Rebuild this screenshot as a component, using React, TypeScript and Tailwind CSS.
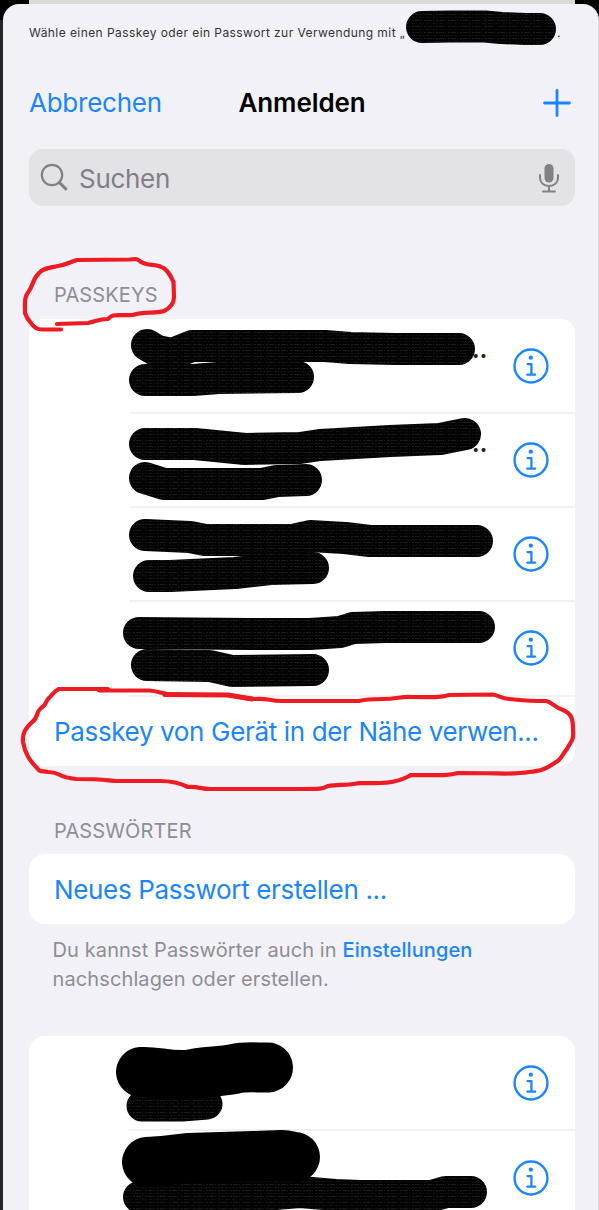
import { ReactNode } from 'react';

const InfoIcon = () => (
  <svg className="block size-[36px]" viewBox="0 0 35 35" fill="none" stroke="#1a85ff" strokeLinecap="round" strokeLinejoin="round">
    <circle cx="17.5" cy="17.5" r="16" strokeWidth="2.3" />
    <circle cx="17.3" cy="9.4" r="2.1" fill="#1a85ff" stroke="none" />
    <path d="M14.100 15.600h3.800v10.200M13.900 26h7.600" strokeWidth="2.200" />
  </svg>
);

function AccountRow({ more, last }: { more?: boolean; last?: boolean }) {
  return (
    <div className="flex h-[94.2px] shrink-0 pl-[100px]">
      <div className={`flex grow items-center justify-end pr-[26px] ${last ? '' : 'border-b-2 border-[#f1f1f2]'}`}>
        {more && <span className="mr-[26px] pb-[33px] text-[25px] leading-none font-semibold tracking-[-0.4px] text-[#222]">..</span>}
        <InfoIcon />
      </div>
    </div>
  );
}

function SectionTitle({ children }: { children: ReactNode }) {
  return <h2 className="pl-[25px] text-[20px] leading-[24px] tracking-[0.12px] text-[#8e8e93]">{children}</h2>;
}

const roughMarks: { d: string; w: number }[] = [
  { d: 'M422 27 L450 26.5 L485 26.5 L501 28 L525 29 L540 29', w: 32 },
  { d: 'M147 345 L157 351 L172 354 L192 346 L325 346 L350 348 L395 349 L459 349', w: 32 },
  { d: 'M145 380 L193 380 L218 378 L298 377', w: 32 },
  { d: 'M145 444 L195 444 L245 449 L300 448 L320 445 L390 441 L440 439 L465 434', w: 32 },
  { d: 'M145 478 L164 484 L262 484 L277 481 L306 480', w: 32 },
  { d: 'M145 535 L190 537 L205 540 L292 540 L310 536 L345 538 L370 541 L477 541', w: 32 },
  { d: 'M149 576 L170 576 L235 573 L270 569 L313 568', w: 32 },
  { d: 'M139 633 L250 634 L310 634 L340 632 L353 628 L385 627 L479 627', w: 32 },
  { d: 'M147 665 L210 666 L232 671 L313 670', w: 32 },
  { d: 'M142 1106 L182 1106 L207 1104', w: 31 },
  { d: 'M139 1197 L240 1197 L300 1192 L335 1195 L360 1196 L432 1196 L446 1192 L471 1192', w: 32 },
];

const smoothMarks = [
  'M141 1072 C157 1071 164 1076 188 1075 C204 1071 220 1072 234 1069 C247 1066 258 1068 268 1067.500',
  'M147 1162 C163 1161 173 1160 188 1158 L253 1156 L282 1155 C288 1155 292 1157 295 1157',
];

const circles = [
  'M57 324 L88 323 C97 321 99 319 108 319 C113 313 117 316 133 315 C144 311 154 314 164 311 C170 308 174 304 174 297 L173.500 282 C171 276 166 268 161 267 C156 264 147 266 141 262 C137 258 135 259 130 259.500 L77 260 C70 262 66 265 58 266 C49 268 43 268 39 273 C32 280 33 286 29 291 C24 297 25 302 25 313 C27 319 29 321 31 323 C34 328 37 329.500 42 329.500 L61 329.500',
  'M99 690.500 L149 690.500 C161 691 161 695 178 695 L226 695 C239 696 244 699 255 699 C268 698 269 701 282 701 L359 701 C366 699 373 699 383 699 C397 699 402 696 412 697 C434 697 440 698 449 695 L492 694.500 C499 695 501 699 509 699 C521 700 523 701 546 701 C552 702 555 708 563 710 C572 714 573 719 573 730 C574 741 571 741 567 749 C563 753 561 760 556 762 C546 769 541 771 529 772 C514 775 506 773 458 773 C447 776 443 775 411 775 C405 778 402 780 396 781 C385 784 380 783 359 783 C347 786 339 784 328 786 C323 789 320 789 300 789 L210 789 C201 789 197 786 188 787 C180 783 171 781 160 781 L117 781 C104 780 102 779 76 779 C56 777 61 772 48 772 C43 771 39 772 38 769 C30 761 25 754 23 742 C22 733 26 728 31 723 C39 718 35 713 41 708 C47 705 45 701 49 698 C53 694 54 691 59 689 L108 689',
];

function Markup() {
  return (
    <svg className="pointer-events-none absolute inset-0" width="599" height="1210" viewBox="0 0 599 1210" fill="none" strokeLinecap="round" strokeLinejoin="round">
      <defs>
        <pattern id="grain" width="97" height="18" patternUnits="userSpaceOnUse">
          <rect width="97" height="18" fill="#030303" />
          <path d="M0 2.500h97M0 8.500h97M0 14.500h97" stroke="#1c1c1c" strokeLinecap="butt" strokeDasharray="2 1 5 1 1 2" />
          <path d="M0 5.500h97M0 11.500h97M0 17.500h97" stroke="#111" strokeLinecap="butt" strokeDasharray="1 2 3 1" />
        </pattern>
      </defs>
      <g stroke="url(#grain)">
        {roughMarks.map((m) => (
          <path key={m.d} d={m.d} strokeWidth={m.w} />
        ))}
      </g>
      <g stroke="#000" strokeWidth="50">
        {smoothMarks.map((d) => (
          <path key={d} d={d} />
        ))}
      </g>
      <g stroke="#ed1c24" strokeWidth="4.2">
        {circles.map((d) => (
          <path key={d} d={d} />
        ))}
        <path d="M165 694.500 L228 695 L252 699" strokeWidth="5" />
      </g>
    </svg>
  );
}

export default function App() {
  return (
    <div className="relative h-[1210px] w-[599px] overflow-hidden bg-[#252527] font-['Inter',sans-serif]">
      <div className="flex h-[4px] bg-black pr-[24px] pl-[29px]">
        <div className="grow bg-[#d9d9d8]" />
      </div>
      <div className="flex h-[1206px] bg-[linear-gradient(to_right,#000_29px,#d9d9d8_29px,#d9d9d8_575px,#000_575px)] bg-[length:100%_16px] bg-no-repeat">
        <main className="ml-[3px] flex w-[596px] flex-col rounded-t-[16px] border-r border-[#dcdce2] bg-[#f2f1f7] pr-[23px] pl-[26px]">
          <div className="flex h-[57px] shrink-0 items-center text-[12px] leading-none whitespace-nowrap text-[#333]">
            <p className="w-[528px] tracking-[0.43px]">Wähle einen Passkey oder ein Passwort zur Verwendung mit „</p>
            <span>.</span>
          </div>
          <header className="flex h-[84px] shrink-0 items-center pb-px text-[26px]">
            <button className="w-[209.5px] text-left tracking-[-0.25px] text-[#1a85ff]">Abbrechen</button>
            <h1 className="grow font-semibold tracking-[-0.1px] text-black">Anmelden</h1>
            <svg className="mr-[4px] block size-[28px]" viewBox="0 0 28 28" stroke="#1a85ff" strokeWidth="2.8" strokeLinecap="round">
              <path d="M14 1.500v25M1.500 14h25" />
            </svg>
          </header>
          <div className="mt-[4px] flex h-[57px] shrink-0 items-center rounded-[14px] bg-[#e3e2e7] pr-[14px] pl-[11px] text-[#818086]">
            <svg className="size-[29px]" viewBox="0 0 29 29" fill="none" stroke="currentColor" strokeLinecap="round">
              <circle cx="12" cy="12" r="10.200" strokeWidth="2.200" />
              <path d="M19.600 19.700l6.200 6.200" strokeWidth="3" />
            </svg>
            <span className="ml-[10px] grow pt-[2px] text-[26px] tracking-[-0.3px]">Suchen</span>
            <svg className="h-[30px] w-[24px]" viewBox="0 0 24 30" fill="none" stroke="currentColor" strokeLinecap="round" strokeWidth="2">
              <rect x="7.500" y="1" width="9" height="18.500" rx="4.500" fill="currentColor" stroke="none" />
              <path d="M3 12v2.500c0 5 3.500 8.500 9 8.500s9-3.500 9-8.500V12M12 23v5.200M6 28.500h12" />
            </svg>
          </div>
          <div className="mt-[77px] shrink-0"><SectionTitle>PASSKEYS</SectionTitle></div>
          <section className="mt-[12px] shrink-0 rounded-[14px] bg-white pt-[0.8px]">
            <AccountRow more />
            <AccountRow more />
            <AccountRow />
            <AccountRow />
            <button className="flex h-[69.4px] w-full items-center pt-px pl-[25px] text-[26px] tracking-[-0.35px] whitespace-nowrap text-[#1a85ff]">
              Passkey von Gerät in der Nähe verwen...
            </button>
          </section>
          <div className="mt-[53px] shrink-0"><SectionTitle>PASSWÖRTER</SectionTitle></div>
          <button className="mt-[11px] flex h-[70px] shrink-0 items-center rounded-[16px] bg-white pt-[2px] pl-[25px] text-[26px] tracking-[-0.34px] text-[#1a85ff]">
            Neues Passwort erstellen ...
          </button>
          <p className="mt-[12px] shrink-0 pl-[23.5px] text-[20px] leading-[29px] tracking-[0.11px] text-[#8e8e93]">
            Du kannst Passwörter auch in <a className="font-medium text-[#1a85ff]">Einstellungen</a>
            <br />
            nachschlagen oder erstellen.
          </p>
          <section className="mt-[42px] h-[174px] shrink-0 overflow-hidden rounded-t-[16px] bg-white pt-[0.8px]">
            <AccountRow />
            <AccountRow last />
          </section>
        </main>
      </div>
      <Markup />
    </div>
  );
}
